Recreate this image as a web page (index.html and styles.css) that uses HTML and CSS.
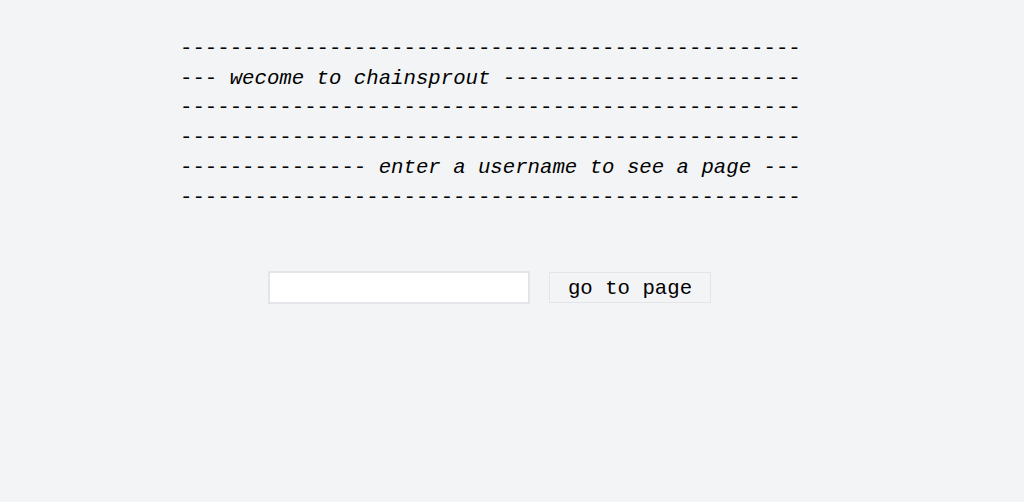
FILE: index.html
```html
<!DOCTYPE html>
<html>
<head>
<meta charset="utf-8">
<link rel="stylesheet" href="styles.css">
</head>
<body>
<main class="page">
<pre class="banner">--------------------------------------------------
--- <em>wecome to chainsprout</em> ------------------------
--------------------------------------------------
--------------------------------------------------
--------------- <em>enter a username to see a page</em> ---
--------------------------------------------------</pre>
<form class="go-form">
<input class="name-input" type="text">
<button class="go-button" type="button">go to page</button>
</form>
</main>
</body>
</html>
```
FILE: styles.css
```css
html, body {
  margin: 0;
  padding: 0;
  background: #f3f4f6;
}
.page {
  width: 1024px;
  height: 502px;
  display: flex;
  flex-direction: column;
  align-items: flex-start;
  padding-left: 180px;
  padding-top: 34px;
  box-sizing: border-box;
}
.banner {
  margin: 0;
  font-family: "Nimbus Mono PS", "Courier", "Liberation Mono", "Courier New", monospace;
  font-size: 20.7px;
  line-height: 29.7px;
  color: #000;
}
.banner em {
  font-style: italic;
}
.go-form {
  display: flex;
  align-items: center;
  gap: 19px;
  margin-top: 59px;
  margin-left: 88px;
}
.name-input {
  width: 262px;
  height: 33px;
  box-sizing: border-box;
  border: 2px solid #e4e5e8;
  background: #fff;
  margin: 0;
  padding: 0 6px;
  outline: none;
}
.go-button {
  width: 162px;
  height: 31px;
  box-sizing: border-box;
  border: 1px solid #e4e5e8;
  background: #f3f4f6;
  font-family: "Nimbus Mono PS", "Courier", "Liberation Mono", "Courier New", monospace;
  font-size: 20.7px;
  color: #000;
  padding: 2px 0 0 0;
  margin: 0;
}
```
